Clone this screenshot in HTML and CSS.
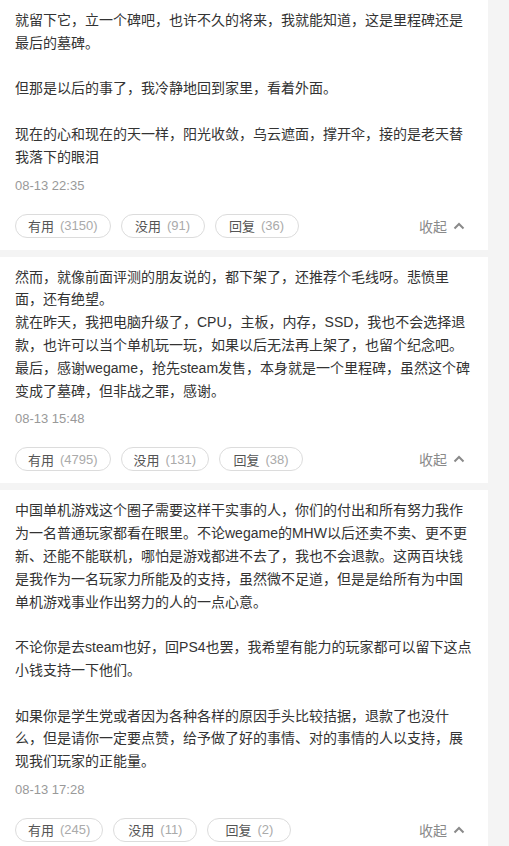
FILE: index.html
```html
<!DOCTYPE html>
<html lang="zh-CN">
<head>
    <meta charset="UTF-8">
    <meta name="viewport" content="width=device-width, initial-scale=1.0">
    <title>评测</title>
    <link rel="stylesheet" href="styles.css">
</head>
<body>
    <div class="list">
        <!-- Review 1 -->
        <div class="review">
            <div class="text">
                <p>就留下它，立一个碑吧，也许不久的将来，我就能知道，这是里程碑还是最后的墓碑。</p>
                <p>但那是以后的事了，我冷静地回到家里，看着外面。</p>
                <p>现在的心和现在的天一样，阳光收敛，乌云遮面，撑开伞，接的是老天替我落下的眼泪</p>
            </div>
            <div class="time">08-13 22:35</div>
            <div class="actions">
                <span class="btn">有用<span class="count">(3150)</span></span>
                <span class="btn">没用<span class="count">(91)</span></span>
                <span class="btn">回复<span class="count">(36)</span></span>
                <span class="collapse">收起
                    <svg width="12" height="8" viewBox="0 0 12 8"><polyline points="1.5,6.5 6,2 10.5,6.5" fill="none" stroke="#8a8a8a" stroke-width="2"/></svg>
                </span>
            </div>
        </div>

        <!-- Review 2 -->
        <div class="review">
            <div class="text">
                <p>然而，就像前面评测的朋友说的，都下架了，还推荐个毛线呀。悲愤里面，还有绝望。<br>就在昨天，我把电脑升级了，CPU，主板，内存，SSD，我也不会选择退款，也许可以当个单机玩一玩，如果以后无法再上架了，也留个纪念吧。<br>最后，感谢wegame，抢先steam发售，本身就是一个里程碑，虽然这个碑变成了墓碑，但非战之罪，感谢。</p>
            </div>
            <div class="time">08-13 15:48</div>
            <div class="actions">
                <span class="btn">有用<span class="count">(4795)</span></span>
                <span class="btn">没用<span class="count">(131)</span></span>
                <span class="btn">回复<span class="count">(38)</span></span>
                <span class="collapse">收起
                    <svg width="12" height="8" viewBox="0 0 12 8"><polyline points="1.5,6.5 6,2 10.5,6.5" fill="none" stroke="#8a8a8a" stroke-width="2"/></svg>
                </span>
            </div>
        </div>

        <!-- Review 3 -->
        <div class="review">
            <div class="text">
                <p>中国单机游戏这个圈子需要这样干实事的人，你们的付出和所有努力我作为一名普通玩家都看在眼里。不论wegame的MHW以后还卖不卖、更不更新、还能不能联机，哪怕是游戏都进不去了，我也不会退款。这两百块钱是我作为一名玩家力所能及的支持，虽然微不足道，但是是给所有为中国单机游戏事业作出努力的人的一点心意。</p>
                <p>不论你是去steam也好，回PS4也罢，我希望有能力的玩家都可以留下这点小钱支持一下他们。</p>
                <p>如果你是学生党或者因为各种各样的原因手头比较拮据，退款了也没什么，但是请你一定要点赞，给予做了好的事情、对的事情的人以支持，展现我们玩家的正能量。</p>
            </div>
            <div class="time">08-13 17:28</div>
            <div class="actions">
                <span class="btn">有用<span class="count">(245)</span></span>
                <span class="btn">没用<span class="count">(11)</span></span>
                <span class="btn">回复<span class="count">(2)</span></span>
                <span class="collapse">收起
                    <svg width="12" height="8" viewBox="0 0 12 8"><polyline points="1.5,6.5 6,2 10.5,6.5" fill="none" stroke="#8a8a8a" stroke-width="2"/></svg>
                </span>
            </div>
        </div>
    </div>
</body>
</html>
```

FILE: styles.css
```css
/* General */
body {
    margin: 0;
    padding: 0;
    background-color: #f4f4f4;
    font-family: "Liberation Sans", "Noto Sans CJK SC", sans-serif;
    color: #333;
    overflow: hidden;
}

.list {
    width: 488px;
    display: flex;
    flex-direction: column;
    gap: 7px;
}

/* Review card */
.review {
    background-color: #fff;
    padding: 9px 15px 12px 15px;
}

.text {
    font-size: 14px;
    line-height: 22.8px;
}

.text p {
    margin: 0;
}

.text p + p {
    margin-top: 22.8px;
}

.time {
    margin-top: 7px;
    font-size: 13px;
    line-height: 20px;
    color: #999;
}

/* Buttons row */
.actions {
    display: flex;
    align-items: center;
    gap: 10px;
    margin-top: 18px;
}

.btn {
    box-sizing: border-box;
    height: 24px;
    min-width: 84px;
    padding: 0 12px;
    border: 1px solid #dcdcdc;
    border-radius: 12px;
    display: flex;
    align-items: center;
    justify-content: center;
    font-size: 13px;
    color: #555;
}

.count {
    margin-left: 6px;
    color: #aaa;
}

.collapse {
    margin-left: auto;
    margin-right: 8px;
    display: flex;
    align-items: center;
    gap: 6px;
    font-size: 14px;
    color: #8a8a8a;
}
```
